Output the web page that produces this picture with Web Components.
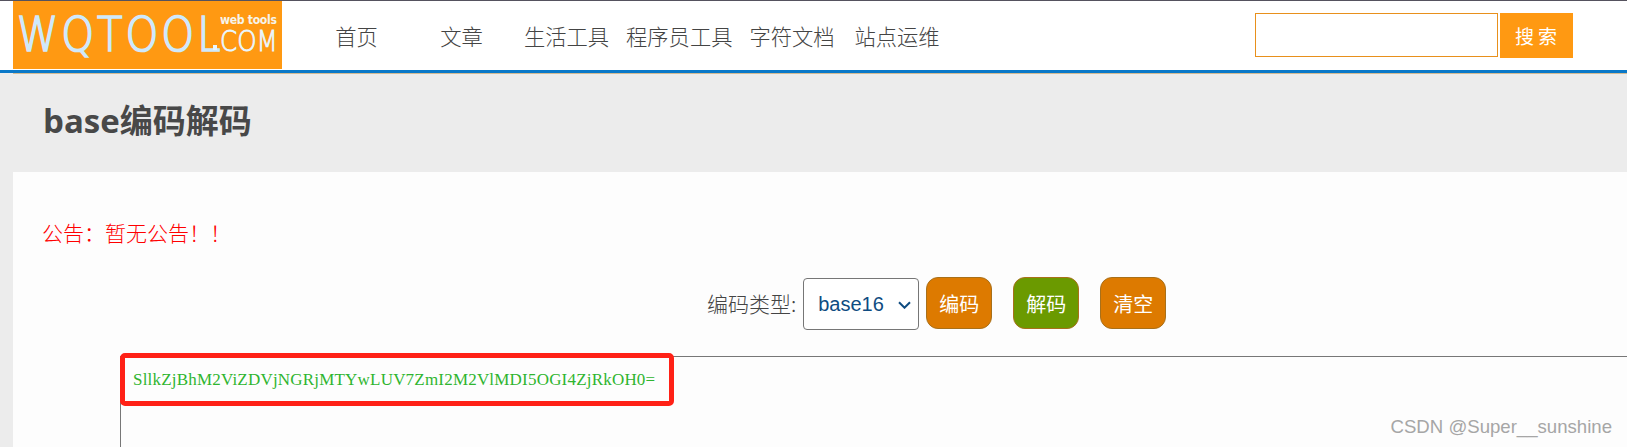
<!DOCTYPE html>
<html lang="zh">
<head>
<meta charset="utf-8">
<title>base编码解码</title>
<style>
  html, body { margin: 0; padding: 0; height: 447px; overflow: hidden; background: #ececec; }
  body { font-family: "Noto Sans CJK SC", "Liberation Sans", sans-serif; font-weight: 300; position: relative; }
</style>
</head>
<body>
<site-header>
  <nav-link>首页</nav-link>
  <nav-link>文章</nav-link>
  <nav-link>生活工具</nav-link>
  <nav-link>程序员工具</nav-link>
  <nav-link>字符文档</nav-link>
  <nav-link>站点运维</nav-link>
</site-header>
<page-title>base编码解码</page-title>
<tool-panel>
  <span slot="notice">公告：暂无公告！！</span>
  <tool-button color="#dd7a00">编码</tool-button>
  <tool-button color="#6b9a00">解码</tool-button>
  <tool-button color="#dd7a00">清空</tool-button>
</tool-panel>
<water-mark>CSDN @Super__sunshine</water-mark>

<script>
// top bar: logo, nav, search
const headerTpl = document.createElement('template');
headerTpl.innerHTML = `
  <style>
    :host {
      display: flex;
      box-sizing: border-box;
      height: 73px;
      background: #fff;
      border-top: 1px solid #55525e;
      border-bottom: 3px solid #0a78c8;
      padding-left: 13px;
    }
    .logo {
      width: 269px;
      height: 68px;
      flex: none;
      background: #ff9912;
      position: relative;
      overflow: hidden;
      font-family: "DejaVu Sans", sans-serif;
      white-space: nowrap;
    }
    .logo span { position: absolute; transform-origin: left top; }
    .logo .big { left: 4px; top: 3px; font-size: 48px; line-height: 60px; color: #cfe9fb; letter-spacing: 3.4px; -webkit-text-stroke: 1.7px #cfe9fb; transform: scaleX(.87); }
    .logo .dot { left: 200px; top: 44px; width: 4px; height: 5px; background: #e9f7ff; }
    .logo .com { left: 207px; top: 23px; font-size: 28px; line-height: 36px; color: #e9f7ff; -webkit-text-stroke: .8px #e9f7ff; transform: scaleX(.88); }
    .logo .web { left: 207px; top: 11px; font-size: 13px; line-height: 16px; font-weight: 700; color: #f6f4ea; letter-spacing: -.4px; transform: scaleX(.84); }
    nav {
      display: flex;
      margin-left: 22px;
      height: 69px;
      align-items: center;
    }
    .search {
      display: flex;
      margin-left: auto;
      margin-right: 54px;
      padding-top: 12px;
      gap: 2px;
      height: 45px;
    }
    .search input {
      box-sizing: border-box;
      width: 243px;
      height: 44px;
      border: 1px solid #e8901c;
      outline: none;
      background: #fff;
      padding: 0;
    }
    .search button {
      width: 73px;
      height: 45px;
      border: none;
      background: #ff9912;
      color: #fff;
      font: 19px "Noto Sans CJK SC", sans-serif;
      letter-spacing: 4px;
      padding: 0 0 0 3px;
    }
  </style>
  <div class="logo">
    <span class="big">WQTOOL</span>
    <span class="dot"></span>
    <span class="web">web tools</span>
    <span class="com">COM</span>
  </div>
  <nav><slot></slot></nav>
  <div class="search">
    <input type="text">
    <button>搜索</button>
  </div>
`;

class SiteHeader extends HTMLElement {
  constructor() {
    super();
    this.attachShadow({mode: 'open'});
    this.shadowRoot.appendChild(headerTpl.content.cloneNode(true));
  }
}
customElements.define('site-header', SiteHeader);

const navTpl = document.createElement('template');
navTpl.innerHTML = `
  <style>
    :host {
      display: block;
      min-width: 105px;
      padding: 0 7px;
      box-sizing: border-box;
      text-align: center;
      font-size: 21.3px;
      color: #444;
      white-space: nowrap;
    }
  </style>
  <slot></slot>
`;

class NavLink extends HTMLElement {
  constructor() {
    super();
    this.attachShadow({mode: 'open'});
    this.shadowRoot.appendChild(navTpl.content.cloneNode(true));
  }
}
customElements.define('nav-link', NavLink);

const titleTpl = document.createElement('template');
titleTpl.innerHTML = `
  <style>
    :host {
      display: flex;
      align-items: center;
      box-sizing: border-box;
      height: 99px;
      padding: 0 0 8px 43px;
      background: linear-gradient(#d3bb94, #d3bb94) 13px 0 / 100% 1px no-repeat #ececec;
      color: #484848;
      font-family: "Open Sans", "Noto Sans CJK SC", sans-serif;
      font-size: 33px;
      font-weight: 700;
    }
  </style>
  <slot></slot>
`;

class PageTitle extends HTMLElement {
  constructor() {
    super();
    this.attachShadow({mode: 'open'});
    this.shadowRoot.appendChild(titleTpl.content.cloneNode(true));
  }
}
customElements.define('page-title', PageTitle);

const panelTpl = document.createElement('template');
panelTpl.innerHTML = `
  <style>
    :host {
      display: block;
      box-sizing: border-box;
      margin-left: 13px;
      height: 275px;
      background: #fdfdfd;
      padding-top: 45px;
      overflow: hidden;
    }
    .notice {
      margin-left: 29px;
      height: 30px;
      line-height: 30px;
      color: #ff0000;
      font-size: 21px;
    }
    .tools {
      display: flex;
      align-items: center;
      margin: 29px 0 0 694px;
      height: 54px;
      font-size: 21px;
      color: #444;
    }
    .tools label { margin-right: 7px; white-space: nowrap; }
    .pick {
      position: relative;
      display: flex;
      margin: 2px 7px 0 0;
    }
    .pick select {
      appearance: none;
      -webkit-appearance: none;
      box-sizing: border-box;
      width: 116px;
      height: 52px;
      padding-left: 14px;
      background: #fff;
      border: 1px solid #767676;
      border-radius: 4px;
      color: #0f4c81;
      font: 20px "Liberation Sans", sans-serif;
      outline: none;
    }
    .pick svg {
      position: absolute;
      right: 8px;
      top: 23px;
      width: 13px;
      height: 8px;
      pointer-events: none;
    }
    .btns { display: flex; gap: 21px; }
    .box {
      position: relative;
      box-sizing: border-box;
      margin: 26px 0 0 107px;
      height: 120px;
      border: 1px solid #777;
      border-right: none;
      border-bottom: none;
      padding: 12px 0 0 12px;
      color: #2fb52f;
      font: 17px/22px "Liberation Serif", serif;
      letter-spacing: .2px;
    }
    .mark {
      position: absolute;
      left: -1px;
      top: -4px;
      width: 554px;
      height: 53px;
      box-sizing: border-box;
      border: 5px solid #ff2116;
      border-radius: 5px;
    }
  </style>
  <div class="notice"><slot name="notice"></slot></div>
  <div class="tools">
    <label>编码类型:</label>
    <div class="pick">
      <select><option>base16</option></select>
      <svg viewBox="0 0 13 8"><path d="M1 1.2l5.5 5.5L12 1.2" fill="none" stroke="#0f4c81" stroke-width="2"/></svg>
    </div>
    <div class="btns"><slot></slot></div>
  </div>
  <div class="box">SllkZjBhM2ViZDVjNGRjMTYwLUV7ZmI2M2VlMDI5OGI4ZjRkOH0=<div class="mark"></div></div>
`;

class ToolPanel extends HTMLElement {
  constructor() {
    super();
    this.attachShadow({mode: 'open'});
    this.shadowRoot.appendChild(panelTpl.content.cloneNode(true));
  }
}
customElements.define('tool-panel', ToolPanel);

const buttonTpl = document.createElement('template');
buttonTpl.innerHTML = `
  <style>
    :host {
      display: flex;
      align-items: center;
      justify-content: center;
      box-sizing: border-box;
      width: 66px;
      height: 52px;
      border: 1px solid #a8701a;
      border-radius: 12px;
      color: #fff;
      font-size: 20px;
      font-weight: 400;
      background: var(--btn, #dd7a00);
    }
  </style>
  <slot></slot>
`;

class ToolButton extends HTMLElement {
  constructor() {
    super();
    this.attachShadow({mode: 'open'});
    this.shadowRoot.appendChild(buttonTpl.content.cloneNode(true));
  }

  connectedCallback() {
    this.style.setProperty('--btn', this.getAttribute('color'));
  }
}
customElements.define('tool-button', ToolButton);

const markTpl = document.createElement('template');
markTpl.innerHTML = `
  <style>
    :host {
      position: absolute;
      right: 15px;
      bottom: 9px;
      color: #a6a6a6;
      font: 18.6px "Liberation Sans", sans-serif;
    }
  </style>
  <slot></slot>
`;

class WaterMark extends HTMLElement {
  constructor() {
    super();
    this.attachShadow({mode: 'open'});
    this.shadowRoot.appendChild(markTpl.content.cloneNode(true));
  }
}
customElements.define('water-mark', WaterMark);
</script>
</body>
</html>
